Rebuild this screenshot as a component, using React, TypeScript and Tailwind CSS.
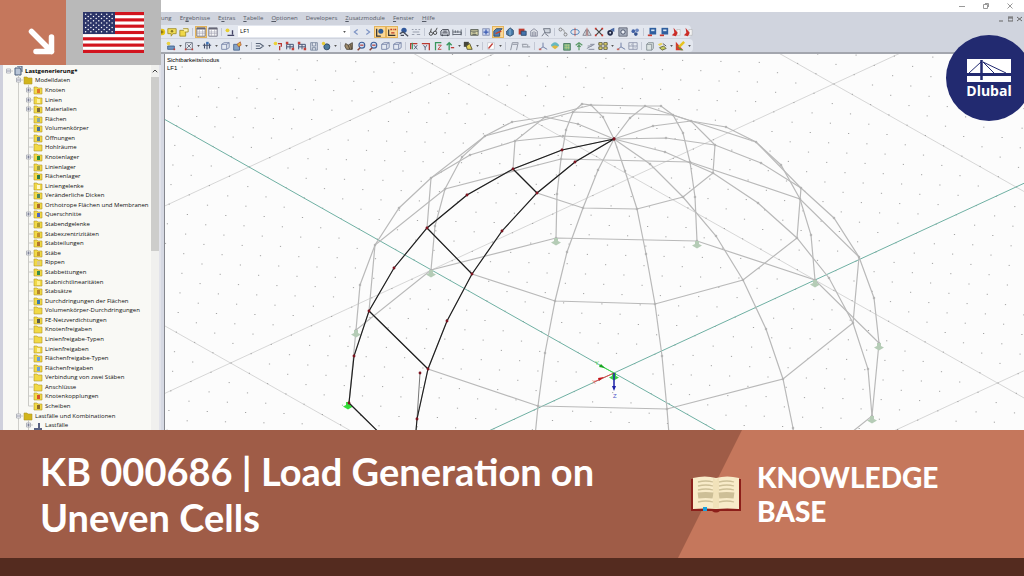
import type { ReactNode } from 'react'
import { ChevronUp } from 'lucide-react'
import clsx from 'clsx'

type Point = [number, number]

/* ---------- toolbar icons, drawn on a 12 x 12 grid ---------- */

const icons: Record<string, ReactNode> = {
  ball: <><circle cx="4" cy="6" r="4" fill="#e6c414" /><path d="M4 4v4M2 6h4" stroke="#6b5a10" /></>,
  note: <><path d="M1 2h10v6H7l-2 3V8H1z" fill="#f2df58" stroke="#a08c22" /><circle cx="6" cy="5" r="1.5" fill="#8a7a20" /></>,
  folder: <><path d="M1 4h7v7H1z" fill="#f0d848" stroke="#a08c22" /><path d="M5 2h6v4H7" fill="#fff6b0" stroke="#a08c22" /></>,
  table: <><path d="M1 1h10v10H1z" fill="#fff" stroke="#667" /><path d="M1 2h10" stroke="#667" strokeWidth="2" /><path d="M1 6h10M1 8h10M4 3v8M8 3v8" stroke="#99a" strokeWidth=".7" /></>,
  load: <><circle cx="3" cy="4" r="2.3" fill="#e8cf30" /><path d="M3 10h8M9 4v5" stroke="#446" strokeWidth="1.6" /></>,
  prev: <path d="M8 3 4 6l4 3" fill="none" stroke="#7d93c4" strokeWidth="1.4" />,
  next: <path d="m4 3 4 3-4 3" fill="none" stroke="#7d93c4" strokeWidth="1.4" />,
  pin: <><path d="M2 2v9h5" fill="none" stroke="#333" strokeWidth="1.5" /><circle cx="7" cy="5" r="3" fill="#2c5c9c" /></>,
  xyz: <><path d="M2 3v7h8" fill="none" stroke="#333" strokeWidth="1.4" /><path d="M4 3h2M7 3h1M9 3h2M5 7h4" stroke="#c03c28" strokeWidth="1.6" /></>,
  view: <><circle cx="6" cy="4" r="3.2" fill="#31589b" /><path d="M1 8l4-2 6 5M2 10h4" fill="none" stroke="#444a58" strokeWidth="1.5" /></>,
  values: <path d="M1 3h2M5 3h2M9 3h2M2 6h8M1 9h3M7 9h4" stroke="#9aa0ae" strokeWidth="1.3" />,
  glasses: <><circle cx="3.5" cy="8" r="2" fill="none" stroke="#333" /><circle cx="8.5" cy="7" r="2" fill="none" stroke="#333" /><path d="M3 6l1-4M9 5l2-4M6 7h1" stroke="#333" /></>,
  machine: <path d="M1 10V5l2-2h7l1 3v4zM3 7h6M4 5h4M3 9v2M9 9v2" fill="#c8ccd4" stroke="#3c404c" />,
  ruler: <path d="M1 3v7M11 3v7M1 6h10v3H1M4 4v3M7 4v3" fill="none" stroke="#555b66" />,
  print: <path d="M2 3h9v7H2zM2 5h9M4 7h4M4 9h5" fill="#d8d4a8" stroke="#555b54" />,
  target: <><path d="M2 2h8v8H2z" fill="#c5d0ec" stroke="#8791b3" /><path d="M6 3v6M3 6h6" stroke="#3858b0" strokeWidth="1.5" /></>,
  modelBlue: <><path d="M1 5l3-3h7L8 5v6H1z" fill="#4c7fb4" stroke="#28456a" /><path d="M3 8l7-3" stroke="#c8442c" strokeWidth="1.6" /></>,
  gem: <><path d="M2 5l4-4 4 3v5l-4 2-4-2z" fill="#4a7dac" stroke="#2a4664" /><path d="M6 2v8" stroke="#9ec8e6" /></>,
  red: <><path d="M2 2h7v7H2z" fill="#bf3d30" /><path d="M5 5h6v5H5z" fill="#4474ae" stroke="#2a4668" /></>,
  building: <path d="M2 11V5l4-3 4 3v6zM4 6v5M6 5v6M8 6v5" fill="#dcdfe4" stroke="#84889a" />,
  screen: <path d="M3 2h8v5H5zM1 11l4-5M5 8l4 3" fill="#cfd5de" stroke="#606675" />,
  chain: <><circle cx="3" cy="3" r="1.8" fill="none" stroke="#777" /><circle cx="9" cy="9" r="1.8" fill="none" stroke="#777" /><path d="M5 3c4 0 1 4 4 4" fill="none" stroke="#888" /></>,
  rotate: <><ellipse cx="6" cy="6" rx="5" ry="3" fill="none" stroke="#3a78b6" /><path d="M6 1v10" stroke="#c04c40" /></>,
  mirror: <><path d="M1 10l4-7v7zM11 10L7 3v7z" fill="#dfe2e8" stroke="#777c88" /><path d="M6 1v10" stroke="#c04c40" strokeWidth=".8" /></>,
  cross: <><path d="M2 2l8 8M10 2l-8 8" stroke="#444" strokeWidth="1.5" /><path d="M1 1h2v2H1zM9 1h2v2H9zM1 9h2v2H1zM9 9h2v2H9z" fill="#d23228" /></>,
  hex: <><circle cx="5" cy="7" r="3.4" fill="#222b48" /><path d="M5 3l5-2v5" fill="#4667a4" /><circle cx="5" cy="7" r="1.2" fill="#dfe3ec" /></>,
  gear: <><path d="M1 1h10v10H1z" fill="#a8b0be" stroke="#5b6271" /><circle cx="6" cy="6" r="2.6" fill="#ecf0f6" stroke="#374058" /></>,
  dots: <><circle cx="4" cy="5" r="2.2" fill="#4463a6" /><circle cx="8.5" cy="4" r="2.2" fill="#6c87bf" /><circle cx="7" cy="8.5" r="2.2" fill="#35528f" /></>,
  save: <><path d="M3 1h8v8H3z" fill="#2f5f9f" /><path d="M5 3h4v2H5z" fill="#d4e4f4" /><path d="M1 9h5v2H1z" fill="#c83a30" /></>,
  pdf: <><path d="M7 3h4v7H7z" fill="#f4f4f4" stroke="#aaa" strokeWidth=".6" /><path d="M3 1l5 6-2 4-5-1 3-3z" fill="#cb2d28" /></>,
  plane: <><path d="M2 6h8v4H2z" fill="#6f95c4" stroke="#3f5c86" /><circle cx="3" cy="3" r="2.2" fill="#ead140" /><path d="M9 9h2v2H9z" fill="#cc3b32" /></>,
  node: <><path d="M2 2h8v8H2z" fill="#e8ecf2" stroke="#5d6676" /><path d="M3 9l6-6M4 4l4 4" stroke="#5c5f74" /><path d="M1 9h2v2H1zM9 9h2v2H9z" fill="#c4403a" /></>,
  bars: <><path d="M1 5h10M3 3v6M6 2v8M9 3v6" stroke="#44506c" strokeWidth="1.3" /><path d="M5 1h3v3H5z" fill="#3c72b8" /></>,
  cube: <path d="M2 4l3-2h6v6l-3 2H2zM2 4h6v6M8 4l3-2" fill="#e4e9f2" stroke="#7280a4" />,
  solid: <><path d="M2 4h7v7H2z" fill="#86a4c6" stroke="#46618a" /><path d="M6 4l4-3 1 4-3 2z" fill="#dfb83c" stroke="#a3392f" strokeWidth=".7" /></>,
  flow: <path d="M1 3h5l4 3-4 3H1M1 6h5" fill="none" stroke="#596579" strokeWidth="1.4" />,
  bolt: <><circle cx="3" cy="3" r="2.2" fill="#ecd337" /><path d="M6 3h4v4M8 6v5" fill="none" stroke="#b83430" strokeWidth="1.5" /></>,
  frame: <><path d="M2 10V4h8v6M2 7h8M6 4v6" fill="none" stroke="#4a5878" strokeWidth="1.2" /><path d="M1 1h3v3H1zM8 8h3v3H8z" fill="#c4403a" /></>,
  disk: <path d="M2 2h8v9H2zM4 2v4h4V2M4 11V8h4v3" fill="#dbe1ea" stroke="#75829a" />,
  globe: <><circle cx="7" cy="7" r="3.6" fill="#4e7c9c" stroke="#29415c" /><circle cx="3" cy="3" r="2" fill="#e5cb36" /></>,
  grab: <path d="M2 3l3 2 5-3v8H3L1 6zM5 5l2 5M8 4l1 6" fill="#a08c6c" stroke="#463d32" />,
  zoomIn: <><circle cx="7" cy="5" r="3.5" fill="#cfe0f4" stroke="#3f5f98" strokeWidth="1.4" /><path d="M5 8l-3 3" stroke="#8a4438" strokeWidth="1.8" /><path d="M5 5h4" stroke="#b83a34" strokeWidth="1.4" /></>,
  axisX: <><path d="M2 10V3h8" fill="none" stroke="#b93730" strokeWidth="1.5" /><path d="M4 2v8" stroke="#38965c" strokeWidth="1.4" /><path d="M6 5l4 5M10 5l-4 5" stroke="#46506a" /></>,
  axisY: <><path d="M1 3h9v8" fill="none" stroke="#b93730" strokeWidth="1.5" /><path d="M3 5l2 3 2-3M5 8v3" fill="none" stroke="#46506a" /></>,
  axisZ: <><path d="M3 11V2h7" fill="none" stroke="#38965c" strokeWidth="1.5" /><path d="M6 5h4l-4 5h4" fill="none" stroke="#b93730" /></>,
  axisUp: <><path d="M5 11V2M2 5l3-3 3 3" fill="none" stroke="#38965c" strokeWidth="1.6" /><path d="M7 8h4" stroke="#b93730" strokeWidth="1.5" /></>,
  render: <><path d="M1 1h6v6H1z" fill="#45453c" /><path d="M4 6l4-3 3 7H5z" fill="#e4d25a" stroke="#4d4a2a" /></>,
  pen: <><path d="M2 2h8v8H2z" fill="#fff" stroke="#c3c7cf" /><path d="M3 9l5-6" stroke="#c0403a" strokeWidth="1.6" /></>,
  gate: <path d="M2 11L4 2h7L9 11M4 4h6" fill="none" stroke="#9298a4" strokeWidth="1.2" />,
  link: <path d="M1 4h6M3 7h8M2 4v3h2M8 4v4" fill="none" stroke="#a0a5af" strokeWidth="1.3" />,
  axes: <><path d="M6 2v5l-4 3M6 7l5 3" fill="none" stroke="#7482a8" strokeWidth="1.2" /><path d="M1 9h3v2H1z" fill="#cc6a60" /></>,
  rainbow: <><path d="M1 6c2-6 8-6 10 0l-5 2z" fill="#67b8c0" /><path d="M2 7l4-2 4 2-4 3z" fill="#ddb840" /></>,
  mesh: <><path d="M2 3h8v8H2z" fill="#76b18a" stroke="#427457" /><path d="M3 5h6M3 8h6M5 4v6M8 4v6" stroke="#c8d080" strokeWidth=".7" /></>,
  tree: <path d="M6 11V3M2 5l4-3 4 3M4 7l2-2 2 2" fill="none" stroke="#5c9a68" strokeWidth="1.4" />,
  slope: <path d="M1 9l9-5M3 10h7M5 4h5M2 6h5" stroke="#8a90a0" strokeWidth="1.2" />,
  quad: <path d="M1 2h4v3H1zM7 2h4v3H7zM1 7h4v3H1zM7 7h4v3H7z" fill="#f2e271" stroke="#4c4a30" />,
  grid: <path d="M1 2h10v8H1zM1 6h10M6 2v8M4 4h1M8 8h1" fill="#e7ebf2" stroke="#8b93aa" />,
  sheet: <path d="M2 4l2-2h6v7l-2 2H2zM2 4h6v7" fill="#dce3e2" stroke="#7f8a90" />,
  layers: <><path d="M1 4l4-2 2 2-4 2z" fill="#ead45a" /><path d="M3 8l5-2 3 3-5 2z" fill="#c8cc60" stroke="#5c5c3c" /><path d="M7 3l4 3" stroke="#444" /></>,
  scale: <><path d="M1 1v10h9z" fill="#d63a2c" /><path d="M1 5l6 6h3z" fill="#46a845" /><path d="M5 7l6-6" stroke="#e6c21e" strokeWidth="3" /></>,
}

// '|' is a group separator, 'v' a drop-down arrow and a leading '*' marks a pressed button
const fileTools = 'note folder | *table table | load'.split(' ')
const resultTools =
  'prev next *pin *xyz view values | glasses machine ruler | print target *modelBlue gem red building screen | chain rotate mirror cross hex gear dots | save save pdf pdf'.split(' ')
const modelTools =
  'plane v node v bars v cube solid v | flow v bolt frame frame disk globe v | grab zoomIn zoomIn cube cube | axisX axisY axisZ axisUp v render v | pen v | gate link | axes rainbow mesh tree slope quad v axes grid | sheet layers v scale v'.split(' ')

function Tools({ items }: { items: string[] }) {
  return (
    <>
      {items.map((item, i) => {
        if (item === '|') return <span key={i} className="mx-0.5 h-2 w-px shrink-0 bg-[#c3c8d4]" />
        if (item === 'v') {
          return (
            <button key={i} aria-label="Mehr" className="flex w-1.5 shrink-0 justify-center">
              <svg viewBox="0 0 4 3" className="h-[2px] w-[3px]"><path d="M0 0h4L2 3z" fill="#555" /></svg>
            </button>
          )
        }
        const pressed = item.startsWith('*')
        const name = item.replace('*', '')
        return (
          <button
            key={i}
            aria-label={name}
            className={clsx(
              'flex size-3 shrink-0 items-center justify-center',
              pressed && 'border border-[#e3b45c] bg-[#fbd795]',
            )}
          >
            <svg viewBox="0 0 12 12" className="size-2.5 shrink-0">{icons[name]}</svg>
          </button>
        )
      })}
    </>
  )
}

/* ---------- menu ---------- */

// text before the access key, the key, text after it
const menus: [string, string, string][] = [
  ['Er', 'g', 'ebnisse'],
  ['E', 'x', 'tras'],
  ['', 'T', 'abelle'],
  ['', 'O', 'ptionen'],
  ['Developers', '', ''],
  ['', 'Z', 'usatzmodule'],
  ['', 'F', 'enster'],
  ['', 'H', 'ilfe'],
]

function Header() {
  return (
    <header className="bg-[#d0d4de]">
      <div className="flex h-3 items-center justify-end gap-4 bg-white pr-2.5">
        <button aria-label="Minimieren" className="size-2">
          <svg viewBox="0 0 8 8" fill="none" stroke="#999"><path d="M1 4.5h6" /></svg>
        </button>
        <button aria-label="Wiederherstellen" className="size-2">
          <svg viewBox="0 0 8 8" fill="none" stroke="#999"><path d="M1.5 2.5h4v4h-4zM3 1.5h3.5V5" /></svg>
        </button>
        <button aria-label="Schließen" className="size-2">
          <svg viewBox="0 0 8 8" fill="none" stroke="#999"><path d="M1.5 1.5l5 5M6.5 1.5l-5 5" /></svg>
        </button>
      </div>
      <nav className="flex h-[13px] items-center gap-2 text-[6px] text-[#555a66]">
        <button>ung</button>
        {menus.map(([before, key, after]) => (
          <button key={before + key + after}>
            {before}<span className="underline">{key}</span>{after}
          </button>
        ))}
        <div className="ml-auto flex items-center gap-1 pr-0.5">
          {['M0 5h4', 'M0 2h5v3H0zM0 1h5', 'M0 1l5 4M5 1L0 5'].map((d) => (
            <svg key={d} viewBox="0 0 5 6" className="h-1.5 w-[5px]" fill="none" stroke="#666"><path d={d} /></svg>
          ))}
        </div>
      </nav>
      <div className="flex h-[13px] w-[530px] items-center rounded-r-sm bg-[#e3e7ef]">
        <svg viewBox="3 0 6 12" className="h-2.5 w-[5px] shrink-0">{icons.ball}</svg>
        <Tools items={fileTools} />
        <label className="relative ml-0.5 flex w-[112px] shrink-0 items-center">
          <select aria-label="Lastfall" className="h-[11px] w-full appearance-none bg-white pl-0.5 text-[6px] text-black">
            <option>LF1</option>
          </select>
          <svg viewBox="0 0 4 3" className="absolute right-1 h-[2px] w-[3px]"><path d="M0 0h4L2 3z" fill="#555" /></svg>
        </label>
        <Tools items={resultTools} />
      </div>
      <div className="mt-px flex h-[13px] w-[532px] items-center rounded-r-sm bg-[#e3e7ef] pl-1">
        <Tools items={modelTools} />
      </div>
      <div className="h-0.5 bg-[#a3a6ae]" />
    </header>
  )
}

/* ---------- project navigator ---------- */

type Row = { label: string; level: number; box?: '+' | '-'; tint?: string; last?: boolean }

const rows: Row[] = [
  { label: 'Lastgenerierung*', level: 0, box: '-' },
  { label: 'Modelldaten', level: 1, box: '-' },
  { label: 'Knoten', level: 2, box: '+', tint: '#e2782c' },
  { label: 'Linien', level: 2, box: '+', tint: '#fff3a0' },
  { label: 'Materialien', level: 2, box: '+', tint: '#7d6a3a' },
  { label: 'Flächen', level: 2, tint: '#8fa898' },
  { label: 'Volumenkörper', level: 2, tint: '#4a6f92' },
  { label: 'Öffnungen', level: 2, tint: '#5c7f8e' },
  { label: 'Hohlräume', level: 2 },
  { label: 'Knotenlager', level: 2, box: '+', tint: '#2a8a3c' },
  { label: 'Linienlager', level: 2, tint: '#9aa048' },
  { label: 'Flächenlager', level: 2, tint: '#2a7a4c' },
  { label: 'Liniengelenke', level: 2, tint: '#fff8c8' },
  { label: 'Veränderliche Dicken', level: 2, tint: '#4d8460' },
  { label: 'Orthotrope Flächen und Membranen', level: 2, tint: '#a8682c' },
  { label: 'Querschnitte', level: 2, box: '+', tint: '#4c62c4' },
  { label: 'Stabendgelenke', level: 2, tint: '#b09a2c' },
  { label: 'Stabexzentrizitäten', level: 2, tint: '#c4902c' },
  { label: 'Stabteilungen', level: 2, tint: '#b4742c' },
  { label: 'Stäbe', level: 2, box: '+', tint: '#c4942c' },
  { label: 'Rippen', level: 2, tint: '#d8c890' },
  { label: 'Stabbettungen', level: 2, tint: '#3c8c4c' },
  { label: 'Stabnichtlinearitäten', level: 2, tint: '#fff08c' },
  { label: 'Stabsätze', level: 2, tint: '#b4842c' },
  { label: 'Durchdringungen der Flächen', level: 2, tint: '#3c7aac' },
  { label: 'Volumenkörper-Durchdringungen', level: 2 },
  { label: 'FE-Netzverdichtungen', level: 2, tint: '#5c5c4c' },
  { label: 'Knotenfreigaben', level: 2 },
  { label: 'Linienfreigabe-Typen', level: 2 },
  { label: 'Linienfreigaben', level: 2, tint: '#fff3a8' },
  { label: 'Flächenfreigabe-Typen', level: 2, tint: '#6ca0d8' },
  { label: 'Flächenfreigaben', level: 2, tint: '#6ca0d8' },
  { label: 'Verbindung von zwei Stäben', level: 2 },
  { label: 'Anschlüsse', level: 2 },
  { label: 'Knotenkopplungen', level: 2, tint: '#d8502c' },
  { label: 'Scheiben', level: 2, tint: '#8c6a2c', last: true },
  { label: 'Lastfälle und Kombinationen', level: 1, box: '-' },
  { label: 'Lastfälle', level: 2, box: '+' },
]

function RowIcon({ row }: { row: Row }) {
  if (row.level === 0) {
    return <path d="M2 2h5l1 2v5H2zM4 0h5v6" fill="#b9c6d8" stroke="#4c607c" />
  }
  if (row.label === 'Lastfälle') {
    return <path d="M1 9h8M6 3v5" stroke="#26325c" strokeWidth="1.5" />
  }
  return (
    <>
      <path d="M1 2h3l1 1h4v6H1z" fill={row.level === 1 ? '#d2b51c' : '#f1d946'} stroke="#b0962a" strokeWidth=".6" />
      {row.tint && <path d="M4 4h3v4H4z" fill={row.tint} />}
    </>
  )
}

function Navigator() {
  return (
    <aside className="flex min-h-0 flex-1 border-l-[3px] border-[#cfd0dc] bg-[#f9f9f5]">
      <ul className="flex min-w-0 flex-1 flex-col pt-px text-[6px] text-[#111]">
        {rows.map((row, i) => (
          <li key={row.label} className="flex min-h-0 flex-1 items-center leading-none whitespace-nowrap">
            {row.level > 0 && <span className="w-2.5 shrink-0" />}
            {row.level > 1 && (
              <span className="flex w-2.5 shrink-0 justify-center self-stretch">
                <span className="w-px bg-[#cfcfcb]" />
              </span>
            )}
            <svg viewBox="0 0 10 10" className="size-2.5 shrink-0" fill="none" stroke="#cacac6">
              <path d={i === 0 ? 'M5 5h6' : row.last ? 'M5.5 0v5h5' : 'M5.5 0v10M5 5h6'} />
              {row.box && (
                <>
                  <path d="M3.5 3h4v4h-4z" fill="#fff" stroke="#b2b5bc" />
                  <path d={row.box === '+' ? 'M4 5h3M5.5 3.5v3' : 'M4 5h3'} stroke="#6a7088" strokeWidth=".8" />
                </>
              )}
            </svg>
            <svg viewBox="0 0 10 10" className="mr-0.5 size-2.5 shrink-0" fill="none">
              <RowIcon row={row} />
            </svg>
            <span className={clsx(i === 0 && 'font-bold text-black')}>{row.label}</span>
          </li>
        ))}
      </ul>
      <div className="flex w-2 shrink-0 flex-col items-center bg-[#f0f0ee]">
        <ChevronUp className="my-0.5 size-2" color="#444" strokeWidth={3} />
        <div className="h-[174px] w-full bg-[#cdcdcb]" />
      </div>
      <div className="w-0.5 bg-[#e2e3ea]" />
    </aside>
  )
}

/* ---------- work plane and dome ---------- */

const CX = 614
const CY = 373
// screen vectors of one grid step
const U: Point = [18.25, 10.3]
const V: Point = [20.1, -9.3]

const gridPoint = (a: number, b: number): Point => [CX + a * U[0] + b * V[0], CY + a * U[1] + b * V[1]]
const toPath = (points: Point[]) => 'M' + points.map(([x, y]) => `${x.toFixed(1)} ${y.toFixed(1)}`).join('L')

const gridDots = (() => {
  let d = ''
  for (let a = -40; a <= 40; a++) {
    for (let b = -40; b <= 40; b++) {
      const [x, y] = gridPoint(a, b)
      if (x > 160 && x < 1030 && y > 50 && y < 440) d += `M${x.toFixed(1)} ${y.toFixed(1)}h1.2`
    }
  }
  return d
})()

const gridLines = [-30, -20, -10, 10, 20, 30]
  .map((n) => toPath([gridPoint(n, -60), gridPoint(n, 60)]) + toPath([gridPoint(-60, n), gridPoint(60, n)]))
  .join('')

// height of the centre of every level, from the apex down to the ground
const levels = [139, 144, 157, 179, 208, 243, 284, 327, 373]

const frontRibs: Point[][] = [
  [[614, 139], [562, 150], [513, 169], [467, 195], [427, 228], [394, 268], [369, 311], [354, 356], [349, 403]],
  [[614, 139], [575, 162], [537, 193], [502, 231], [472, 274], [447, 321], [428, 369], [417, 419], [413, 466]],
  [[614, 139], [598, 170], [583, 208], [567, 252], [555, 301], [545, 353], [538, 406], [533, 457], [531, 505]],
  [[614, 139], [625, 171], [637, 209], [646, 254], [655, 304], [662, 356], [667, 409], [671, 460], [672, 508]],
  [[614, 139], [650, 164], [683, 197], [716, 236], [743, 280], [766, 329], [783, 379], [793, 428], [797, 476]],
  [[614, 139], [665, 152], [713, 173], [758, 203], [797, 238], [829, 278], [853, 323], [868, 369], [872, 416]],
]
const backRibs = frontRibs.map((rib) => rib.map(([x, y], i): Point => [2 * CX - x, 2 * levels[i] - y]))
const ribs = [...frontRibs, ...backRibs]
const rings = [2, 4, 6, 8].map((level) => ribs.map((rib) => rib[level]))
const [ribA, ribB] = frontRibs

function Support({ at: [x, y], fill }: { at: Point; fill: string }) {
  return <path d={`M${x - 2} ${y}h4v3l3 1.5-5 3-5-3 3-1.5z`} fill={fill} />
}

function Viewport() {
  return (
    <main className="relative min-h-0 flex-1 overflow-hidden border-l border-[#85878e] bg-[#fcfcfc]">
      <svg viewBox="165 54 859 376" preserveAspectRatio="xMinYMin slice" className="block size-full" fill="none">
        <path d={gridLines} stroke="#cdcdcd" strokeWidth=".8" />
        <path d={gridDots} stroke="#a4a4a4" />
        <path
          d={toPath([gridPoint(-60, 0), gridPoint(60, 0)]) + toPath([gridPoint(0, -60), gridPoint(0, 60)])}
          stroke="#6fb0a3"
        />
        {ribs.map((rib, i) => <path key={i} d={toPath(rib)} stroke="#b9b9b9" strokeWidth="1.2" />)}
        {rings.map((ring, i) => <path key={i} d={toPath(ring) + 'Z'} stroke="#b9b9b9" strokeWidth="1.2" />)}
        {ribs.flat().map(([x, y], i) => (
          <circle key={i} cx={x} cy={y} r=".9" fill="#c8c8c8" stroke="#a2a2a2" strokeWidth=".6" />
        ))}
        {ribs.slice(1).map((rib, i) => <Support key={i} at={rib[8]} fill="#b5ccb6" />)}
        <Support at={[348, 402]} fill="#35dd3a" />

        <path d="M420 373L417 419" stroke="#777" />
        <path
          d={toPath(ribA) + toPath(ribB) + [2, 4, 6, 8].map((n) => toPath([ribA[n], ribB[n]])).join('')}
          stroke="#1c1c1c"
          strokeWidth="1.1"
        />
        {[...ribA, ...ribB, [420, 373] as Point].map(([x, y], i) => (
          <circle key={i} cx={x} cy={y} r="1.4" fill="#7d1420" />
        ))}

        <Support at={[614, 373]} fill="#3ccf45" />
        <path d="M614 373l-15-8" stroke="#3fe043" />
        <path d="M605 368l-6-1 2-3z" fill="#19a31f" />
        <path d="M614 373l-20 9" stroke="#e24848" />
        <path d="M604 377l-5 4-1-3z" fill="#c8161c" />
        <path d="M614 373v14" stroke="#1c20a8" strokeWidth="1.5" />
        <path d="M612 386h4l-2 5z" fill="#1c20a8" />
        <g fontSize="6" fontFamily="Liberation Sans, sans-serif">
          <text x="595" y="365" fill="#4fe052">Y</text>
          <text x="592" y="384" fill="#e88080">X</text>
          <text x="613" y="398" fill="#5258c8">Z</text>
        </g>
      </svg>
      <p className="absolute top-0.5 left-0.5 font-['Liberation_Sans',sans-serif] text-[6px] leading-[8px] text-black">
        Sichtbarkeitsmodus<br />LF1
      </p>
    </main>
  )
}

/* ---------- overlays ---------- */

function Flag() {
  const stars = Array.from({ length: 9 }, (_, r) =>
    Array.from({ length: r % 2 ? 5 : 6 }, (_, c) => ({ x: 2.6 + c * 5.3 + (r % 2 ? 2.6 : 0), y: 2.2 + r * 2.2 })),
  ).flat()
  return (
    <svg viewBox="0 0 61 41" className="h-[41px] w-[61px]">
      <path d="M0 0h61v41H0z" fill="#fff" />
      {[0, 1, 2, 3, 4, 5, 6].map((n) => (
        <rect key={n} y={n * 6.308} width="61" height="3.154" fill="#d2141e" />
      ))}
      <path d="M0 0h32v22H0z" fill="#2c3568" />
      {stars.map(({ x, y }, i) => <circle key={i} cx={x} cy={y} r=".75" fill="#fff" />)}
    </svg>
  )
}

function Badges() {
  return (
    <div className="flex h-[65px] shrink-0">
      <div className="w-[66px] bg-[#c5775c]">
        <svg viewBox="0 0 66 65" className="h-full w-full" fill="none" stroke="#fff" strokeWidth="5.5" strokeLinecap="round" strokeLinejoin="round">
          <path d="M31.5 31.5l20 20M36 51.5h15.5V37" />
        </svg>
      </div>
      <div className="flex flex-1 items-center justify-center bg-[#b9b9b9]">
        <Flag />
      </div>
    </div>
  )
}

function Logo() {
  return (
    <div className="absolute top-[35px] -right-2 flex size-[86px] flex-col items-center rounded-full bg-[#222a70] pt-6 text-white">
      <svg viewBox="0 0 44 23" className="h-[23px] w-11" fill="none" stroke="#222a70">
        <path d="M0 0h44v14H0zM0 17h44v6H0z" fill="#fff" stroke="none" />
        <path d="M14.5 1v20" strokeWidth="2.5" />
        <path d="M14 3L2 14M16 3l11 11M16 3l23 11" />
      </svg>
      <span className="text-[14px] leading-[18px] font-bold">Dlubal</span>
    </div>
  )
}

function Book() {
  return (
    <svg viewBox="0 0 50 37" className="h-[37px] w-[50px] shrink-0">
      <path d="M0 3h50v32H29q-4 3-8 0H0z" fill="#8c1f1a" />
      <path d="M2 2q12-3 23 0v31q-11-1-23 0zM48 2q-12-3-23 0v31q11-1 23 0z" fill="#f8ebc9" />
      <path d="M22 2q3 1 3 3 0-2 3-3v30q-3 0-3 1 0-1-3-1z" fill="#f1e2ba" />
      <g fill="none" stroke="#cdbf97" strokeWidth="1.3">
        <path d="M7 6q8-2 15 0M7 10q8-2 15 0M7 14q8-2 15 0M7 26q8-2 15 0M28 6q8-2 15 0M28 10q8-2 15 0M28 14q8-2 15 0M28 26q8-2 15 0" />
        <path d="M7 19.5q8-1 15 0M28 19.5q8-1 15 0" strokeWidth="6" />
      </g>
      <path d="M12 31h4v4h-4z" fill="#18a0dc" />
    </svg>
  )
}

export default function App() {
  return (
    <div className="flex h-screen flex-col overflow-hidden bg-white font-['Open_Sans','Noto_Sans',sans-serif]">
      <section className="relative flex min-h-0 flex-1 overflow-hidden">
        <div className="flex w-[161px] shrink-0 flex-col">
          <Badges />
          <Navigator />
        </div>
        <div className="flex min-w-0 flex-1 flex-col">
          <Header />
          <div className="flex min-h-0 flex-1 bg-[#d6d9e3] pl-[3px]">
            <Viewport />
          </div>
        </div>
        <Logo />
      </section>

      <section className="relative flex h-32 shrink-0 bg-[#9f5c47] font-['Lato',sans-serif] text-white">
        <div className="absolute inset-y-0 right-0 w-[346px] bg-[#c5775c] [clip-path:polygon(64px_0,100%_0,100%_100%,0_100%)]" />
        <h1 className="relative flex-1 pt-[18px] pl-10 text-[38px] leading-[46px] font-bold">
          KB 000686 | Load Generation on<br />Uneven Cells
        </h1>
        <div className="relative flex w-[333px] items-center gap-4">
          <Book />
          <h2 className="text-[28px] leading-[34px] font-black">KNOWLEDGE<br />BASE</h2>
        </div>
      </section>
      <footer className="h-[18px] shrink-0 bg-[#542b1f]" />
    </div>
  )
}
